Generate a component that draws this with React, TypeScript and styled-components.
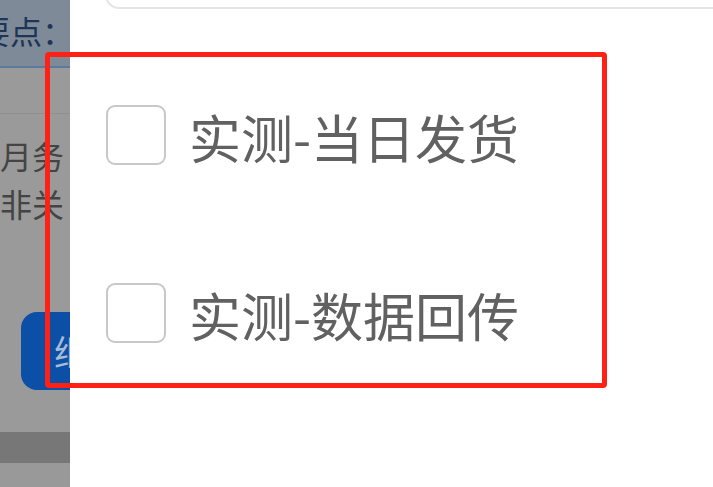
import { createGlobalStyle } from 'styled-components';
import styled from 'styled-components';

const GlobalStyle = createGlobalStyle`
	html, body {
		margin: 0;
		padding: 0;
		background: #ffffff;
	}
	body {
		font-family: "Noto Sans CJK SC", "Noto Sans", sans-serif;
	}
`;

const Screen = styled.div`
	position: relative;
	display: flex;
	width: 713px;
	height: 487px;
	overflow: hidden;
	background: #fff;
`;

/* dimmed page behind the drawer */
const Backdrop = styled.div`
	width: 70px;
	flex-shrink: 0;
	display: flex;
	flex-direction: column;
	overflow: hidden;
	background: #9a9a9a;
	color: #3f3f3f;
`;

const BackdropHeader = styled.div`
	height: 68px;
	flex-shrink: 0;
	display: flex;
	align-items: center;
	background: #7f8a99;
	border-bottom: 2px solid #5b7aa0;
	box-sizing: border-box;
`;

const HeaderLabel = styled.div`
	margin-left: -22px;
	margin-top: -6px;
	white-space: nowrap;
	font-size: 32px;
	line-height: 1;
	color: #1d3556;
`;

const BackdropDivider = styled.div`
	height: 45px;
	flex-shrink: 0;
	border-bottom: 1px solid #8f8f8f;
`;

const BackdropText = styled.div`
	margin-top: 17px;
	font-size: 32px;
	line-height: 48px;
	white-space: nowrap;
	color: #444;
`;

const BackdropButton = styled.div`
	margin-top: 85px;
	margin-left: 21px;
	width: 120px;
	height: 78px;
	flex-shrink: 0;
	border-radius: 16px;
	background: #0b4fa6;
	color: #a9bcd6;
	font-size: 36px;
	display: flex;
	align-items: center;
	padding-left: 33px;
	box-sizing: border-box;
	white-space: nowrap;
`;

const BackdropBand = styled.div<{ $dark?: boolean }>`
	flex: ${(p) => (p.$dark ? '0 0 31px' : '1')};
	margin-top: ${(p) => (p.$dark ? '42px' : '0')};
	background: ${(p) => (p.$dark ? '#777777' : '#999999')};
`;

/* white drawer */
const Drawer = styled.div`
	flex: 1;
	display: flex;
	flex-direction: column;
	background: #fff;
	min-width: 0;
`;

const SearchBox = styled.div`
	margin-top: -50px;
	margin-left: 35px;
	margin-right: -30px;
	height: 59px;
	flex-shrink: 0;
	border: 2px solid #e4e4e4;
	border-radius: 14px;
	box-sizing: border-box;
`;

const OptionList = styled.div`
	display: flex;
	flex-direction: column;
	gap: 118px;
	padding-top: 96px;
	padding-left: 36px;
`;

const OptionRow = styled.label`
	display: flex;
	align-items: center;
	gap: 23px;
	height: 60px;
`;

const CheckBox = styled.span`
	width: 60px;
	height: 60px;
	flex-shrink: 0;
	box-sizing: border-box;
	border: 2.5px solid #c8c8c8;
	border-radius: 9px;
	background: #fff;
`;

const OptionText = styled.span`
	font-size: 52px;
	line-height: 1;
	margin-top: 4px;
	color: #616161;
	white-space: nowrap;
`;

const Highlight = styled.div`
	position: absolute;
	left: 45px;
	top: 52px;
	width: 562px;
	height: 336px;
	box-sizing: border-box;
	border: 5px solid #ff2116;
	border-radius: 4px;
	pointer-events: none;
`;

const options = ['实测-当日发货', '实测-数据回传'];

export default function App() {
	return (
		<>
			<GlobalStyle />
			<Screen>
				<Backdrop>
					<BackdropHeader>
						<HeaderLabel>要点：</HeaderLabel>
					</BackdropHeader>
					<BackdropDivider />
					<BackdropText>
						月务
						<br />
						非关
					</BackdropText>
					<BackdropButton>继续</BackdropButton>
					<BackdropBand $dark />
					<BackdropBand />
				</Backdrop>
				<Drawer>
					<SearchBox />
					<OptionList>
						{options.map((label) => (
							<OptionRow key={label}>
								<CheckBox />
								<OptionText>{label}</OptionText>
							</OptionRow>
						))}
					</OptionList>
				</Drawer>
				<Highlight />
			</Screen>
		</>
	);
}
